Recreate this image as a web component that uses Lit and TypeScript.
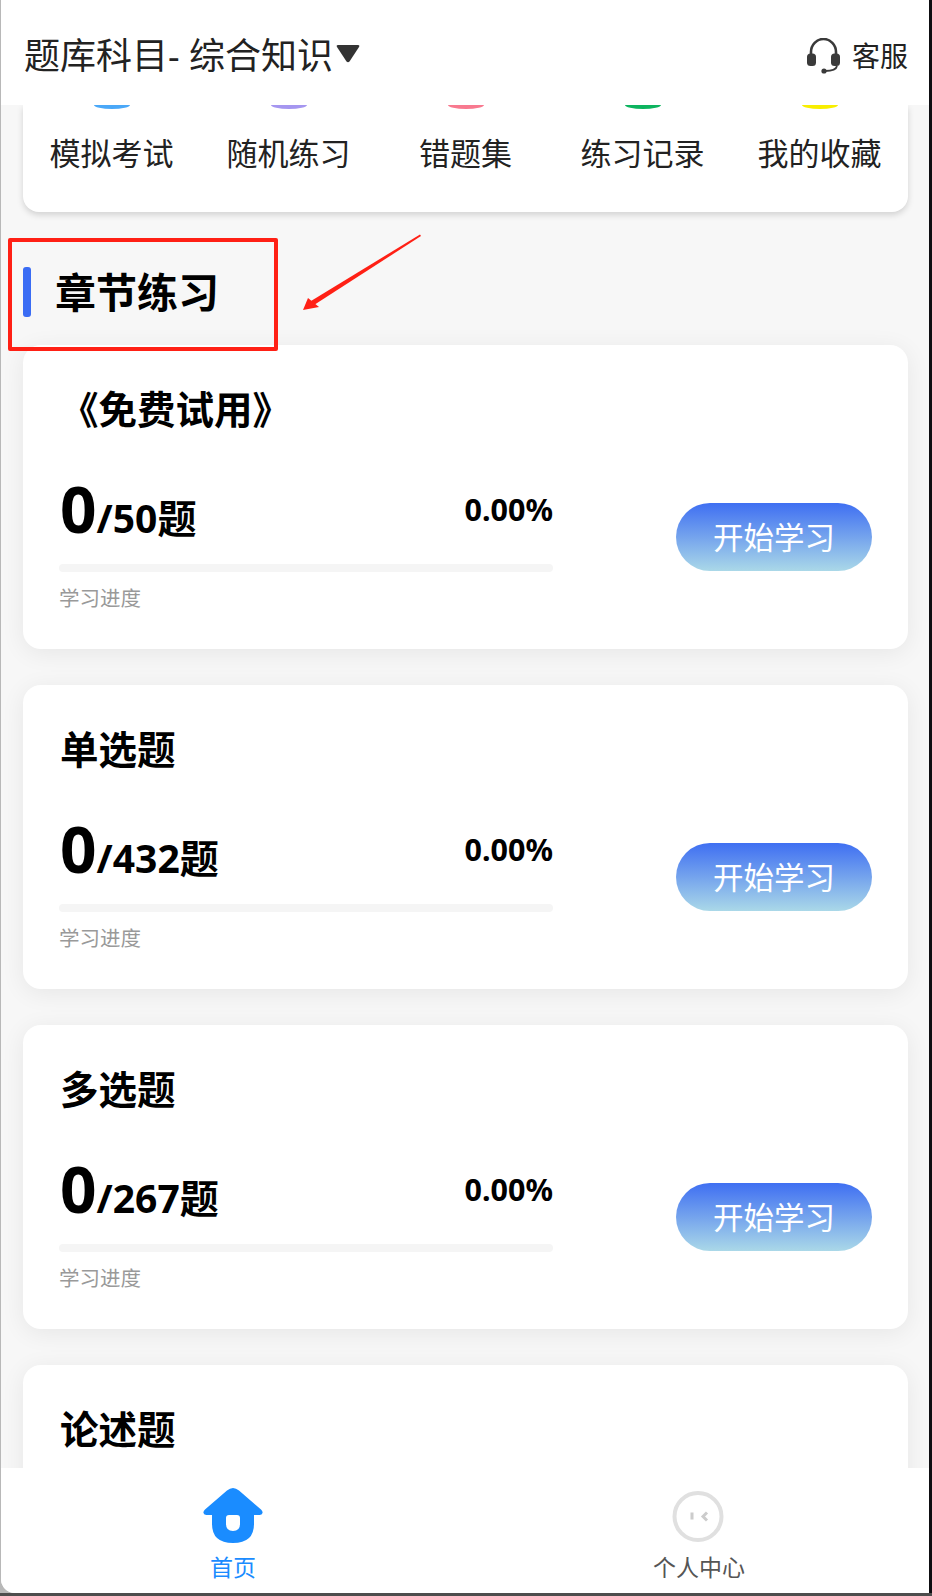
import { LitElement, html, css, svg, nothing } from "lit";
import { customElement } from "lit/decorators.js";

const SHORTCUTS = [
  { label: "模拟考试", color: "#4aa8f8" },
  { label: "随机练习", color: "#a596f0" },
  { label: "错题集", color: "#f8798f" },
  { label: "练习记录", color: "#0db45f" },
  { label: "我的收藏", color: "#f8ee00" }
];

const CHAPTERS = [
  { title: "《免费试用》", total: 50 },
  { title: "单选题", total: 432 },
  { title: "多选题", total: 267 }
];

@customElement("chapter-card")
export class ChapterCard extends LitElement {
  static override properties = {
    heading: { type: String },
    total: { type: Number }
  };

  declare heading: string;
  declare total: number | undefined;

  static override styles = css`
    :host {
      display: block;
      height: 304px;
      box-sizing: border-box;
      padding: 0 36px;
      background: #fff;
      border-radius: 18px;
      box-shadow: 0 4px 24px rgba(0, 0, 0, 0.07);
    }
    .title {
      height: 124px;
      box-sizing: border-box;
      padding: 39px 0 0 1px;
      font-size: 38.5px;
      line-height: 50px;
      font-weight: 700;
      color: #000;
    }
    .body {
      display: flex;
      align-items: flex-start;
      justify-content: space-between;
    }
    .stats {
      width: 494px;
    }
    .row {
      display: flex;
      align-items: flex-start;
      justify-content: space-between;
      height: 95px;
    }
    .count {
      display: flex;
      align-items: baseline;
      padding-left: 1px;
      color: #000;
      font-weight: 700;
    }
    .done {
      font-size: 64px;
      line-height: 80px;
    }
    .of {
      font-size: 39px;
    }
    .pct {
      font-size: 30.5px;
      line-height: 80px;
      font-weight: 700;
      color: #000;
    }
    .track {
      height: 8px;
      border-radius: 4px;
      background: #f5f5f5;
      margin-bottom: 11px;
    }
    .caption {
      font-size: 20.5px;
      line-height: 30px;
      color: #999;
    }
    .start {
      width: 196px;
      height: 68px;
      border: 0;
      padding: 0;
      border-radius: 34px;
      background: linear-gradient(180deg, #3f6ff2, #aad8e8);
      color: #fff;
      font-family: inherit;
      font-size: 30.5px;
      line-height: 64px;
      margin-top: 34px;
    }
  `;

  override render() {
    return html`
      <div class="title">${this.heading}</div>
      ${this.total === undefined
        ? nothing
        : html`<div class="body">
            <div class="stats">
              <div class="row">
                <div class="count">
                  <span class="done">0</span><span class="of">/${this.total}题</span>
                </div>
                <div class="pct">0.00%</div>
              </div>
              <div class="track"></div>
              <div class="caption">学习进度</div>
            </div>
            <button class="start">开始学习</button>
          </div>`}
    `;
  }
}

@customElement("app-root")
export class AppRoot extends LitElement {
  static override styles = css`
    :host {
      display: block;
      width: 932px;
      height: 1596px;
      background: #4d4d4d;
      overflow: hidden;
      font-family: "Noto Sans", "Noto Sans CJK SC", sans-serif;
    }
    .frame {
      width: 932px;
      height: 1593px;
      box-sizing: border-box;
      padding-left: 1px;
      background: #b8b8b8;
      border-right: 3px solid #0e0e12;
    }
    .screen {
      height: 100%;
      border-bottom-left-radius: 14px;
      background: #f7f7f7;
      display: flex;
      flex-direction: column;
      overflow: hidden;
    }
    .topbar {
      flex: none;
      position: relative;
      z-index: 1;
      height: 105px;
      box-sizing: border-box;
      padding: 32px 21px 0 23px;
      background: #fff;
      display: flex;
      justify-content: space-between;
      align-items: flex-start;
    }
    .subject {
      display: flex;
      align-items: center;
      font-size: 36px;
      line-height: 48px;
      color: #222;
    }
    .caret {
      width: 24px;
      height: 19px;
      margin: -6px 0 0 3px;
    }
    .service {
      display: flex;
      align-items: center;
      gap: 11px;
      font-size: 28px;
      line-height: 48px;
      color: #222;
    }
    .service svg {
      width: 34px;
      height: 36px;
    }
    .content {
      flex: 1;
      min-height: 0;
      overflow: hidden;
      padding: 0 21px 0 22px;
    }
    .shortcuts {
      height: 107px;
      background: #fff;
      border-radius: 0 0 16px 16px;
      box-shadow: 0 3px 6px rgba(0, 0, 0, 0.15);
      display: grid;
      grid-template-columns: repeat(5, 1fr);
    }
    .shortcut {
      display: flex;
      flex-direction: column;
      align-items: center;
      font-size: 31px;
      color: #222;
    }
    .dot {
      width: 36px;
      height: 4px;
      border-radius: 0 0 18px 18px / 0 0 4px 4px;
    }
    .shortcut span {
      margin-top: 20px;
      line-height: 48px;
    }
    .section {
      display: flex;
      align-items: center;
      height: 133px;
      box-sizing: border-box;
      padding-top: 27px;
      gap: 24px;
      font-size: 41px;
      font-weight: 700;
      color: #000;
      position: relative;
    }
    .section i {
      width: 8px;
      height: 50px;
      border-radius: 3px;
      background: #3a6cf4;
    }
    .section span {
      margin-top: -4px;
    }
    .highlight {
      position: absolute;
      left: -15px;
      top: 26px;
      width: 270px;
      height: 113px;
      border: 4px solid #ff2015;
      border-radius: 2px;
      box-sizing: border-box;
      z-index: 1;
    }
    .arrow {
      position: absolute;
      left: 271px;
      top: 20px;
      width: 130px;
      height: 84px;
    }
    .cards {
      display: flex;
      flex-direction: column;
      gap: 36px;
    }
    .tabbar {
      flex: none;
      height: 125px;
      background: #fff;
      display: grid;
      grid-template-columns: 1fr 1fr;
      position: relative;
      padding-top: 20px;
      box-sizing: border-box;
    }
    .tab {
      display: flex;
      flex-direction: column;
      align-items: center;
      font-size: 23px;
      color: #555;
      gap: 5px;
    }
    .tab.profile {
      padding-left: 4px;
    }
    .tab.active {
      color: #1a8cff;
    }
    .tab svg {
      width: 60px;
      height: 56px;
    }
  `;

  private renderHeadset() {
    return html`<svg viewBox="0 0 34 36">
      <path d="M4 17 V14 a12.5 13 0 0 1 25 0 V17" fill="none" stroke="#3a3a3a" stroke-width="2.6" />
      <rect x="0" y="15.5" width="9" height="12.5" rx="3.5" fill="#3a3a3a" />
      <rect x="24" y="15.5" width="9" height="12.5" rx="3.5" fill="#3a3a3a" />
      <path d="M30 28 q-1 5 -12 5" fill="none" stroke="#3a3a3a" stroke-width="1.8" />
      <circle cx="17" cy="33" r="2.6" fill="#3a3a3a" />
    </svg>`;
  }

  private renderHome() {
    return svg`<path fill="#1a8cff" fill-rule="evenodd" d="M30 0 q3 0 6 2.5 l22 19 q2 2 1.5 3.5 q-0.5 2 -3 2 h-5.5 v9 q0 19 -21 19 q-21 0 -21 -19 v-9 h-5.5 q-2.5 0 -3 -2 q-0.5 -1.5 1.5 -3.5 l22 -19 q3 -2.5 6 -2.5 z M23 30 v6 q0 7 7 7 q7 0 7 -7 v-6 q0 -3 -3 -3 h-8 q-3 0 -3 3 z" />`;
  }

  override render() {
    return html`
      <div class="frame">
        <div class="screen">
          <header class="topbar">
            <div class="subject">
              题库科目- 综合知识
              <svg class="caret" viewBox="0 0 24 19">
                <path d="M2 1 H22 Q24 1 23 3 L13.5 17.5 Q12 19 10.5 17.5 L1 3 Q0 1 2 1 Z" fill="#333" />
              </svg>
            </div>
            <div class="service">${this.renderHeadset()}客服</div>
          </header>
          <main class="content">
            <div class="shortcuts">
              ${SHORTCUTS.map(
                (s) => html`<div class="shortcut">
                  <div class="dot" style="background:${s.color}"></div>
                  <span>${s.label}</span>
                </div>`
              )}
            </div>
            <div class="section">
              <i></i><span>章节练习</span>
              <div class="highlight"></div>
              <svg class="arrow" viewBox="0 0 130 84">
                <path d="M126 2.5 L127 4 L20 73 L17 69 Z" fill="#ff2015" />
                <path d="M9 78 L25 75 L14 66 Z" fill="#ff2015" />
              </svg>
            </div>
            <div class="cards">
              ${CHAPTERS.map(
                (c) => html`<chapter-card .heading=${c.title} .total=${c.total}></chapter-card>`
              )}
              <chapter-card .heading=${"论述题"}></chapter-card>
            </div>
          </main>
          <nav class="tabbar">
            <div class="tab active">
              <svg viewBox="0 0 60 56">${this.renderHome()}</svg>
              首页
            </div>
            <div class="tab profile">
              <svg viewBox="0 0 60 56">
                <circle cx="29" cy="28.5" r="23.5" fill="none" stroke="#e0e0e0" stroke-width="4" />
                <path d="M23 24.5 v7 M38 24.5 l-4 4 l4 4" fill="none" stroke="#ccc" stroke-width="3" />
              </svg>
              个人中心
            </div>
          </nav>
        </div>
      </div>
    `;
  }
}
